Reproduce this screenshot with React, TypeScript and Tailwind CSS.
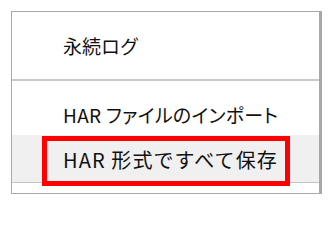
export default function App() {
  const font = "font-['Noto_Sans_CJK_JP','Noto_Sans',sans-serif] text-[#111] leading-none";

  return (
    <div className="w-[333px] h-[202px] bg-white pt-[11px] pl-[11px]">
      <div className="relative flex flex-col w-[311px] h-[183px] border-t border-l border-b border-[#a9a9a9] border-r-[3px] border-r-[#a8a8a8]">
        <div className={`flex items-center h-[67px] pl-[51px] text-[19px] ${font}`}>永続ログ</div>
        <div className="h-[2px] bg-[#c9c9c9]" />
        <div className={`flex items-center h-[54px] pt-[13px] pl-[51px] text-[19px] tracking-[0.3px] [font-feature-settings:'palt'] ${font}`}>
          HAR ファイルのインポート
        </div>
        <div className={`flex items-center h-[47px] pt-[3px] pl-[51px] bg-[#f0f0f0] text-[20px] tracking-[1.1px] ${font}`}>
          HAR 形式ですべて保存
        </div>
        <div className="h-px bg-[#c4c4c4]" />
        <div className="flex-1" />

        {/* annotation */}
        <div className="absolute left-[30px] top-[124px] w-[248px] h-[50px] border-[5px] border-[#ff0000]" />
      </div>
    </div>
  );
}
